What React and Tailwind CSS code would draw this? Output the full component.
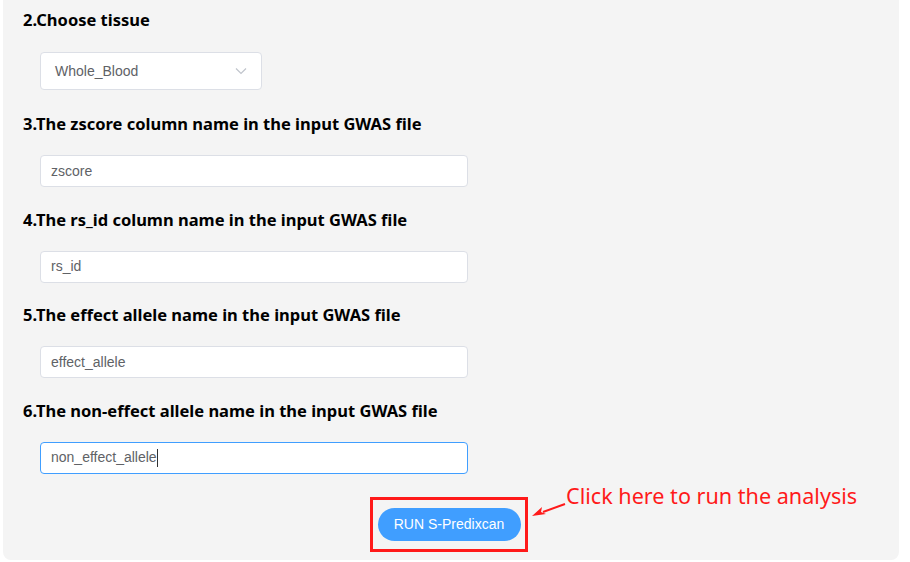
import React from 'react';

const Section = ({ title, value, focused }) => (
  <div className="mb-[20.5px]">
    <h3 className="h-[24px] leading-[24px] text-[16.5px] font-bold text-black font-['Noto_Sans',sans-serif] mb-[19px]">
      {title}
    </h3>
    <div
      className={`ml-[17px] w-[428px] h-[32px] bg-white rounded-[4px] border flex items-center px-[10px] ${
        focused ? 'border-[#409eff]' : 'border-[#dcdfe6]'
      }`}
    >
      <span className="text-[14px] text-[#606266] font-['Liberation_Sans',sans-serif]">{value}</span>
      {focused && <span className="w-px h-[18px] bg-[#303133]" />}
    </div>
  </div>
);

export default function App() {
  return (
    <div className="w-[910px] h-[562px] bg-white relative overflow-hidden">
      <div className="ml-[3px] w-[896px] h-[560px] bg-[#f4f4f4] rounded-b-[8px] pl-[20px] pt-[8px]">
        <h3 className="h-[24px] leading-[24px] text-[16.5px] font-bold text-black font-['Noto_Sans',sans-serif] mb-[20px]">
          2.Choose tissue
        </h3>
        <div className="ml-[17px] w-[222px] h-[38px] bg-white rounded-[4px] border border-[#dcdfe6] flex items-center justify-between pl-[14px] pr-[14px] mb-[22px]">
          <span className="text-[14px] text-[#606266] font-['Liberation_Sans',sans-serif]">Whole_Blood</span>
          <svg width="12" height="8" viewBox="0 0 12 8" fill="none">
            <path d="M1 1.5 L6 6.5 L11 1.5" stroke="#c0c4cc" strokeWidth="1.2" />
          </svg>
        </div>
        <Section title="3.The zscore column name in the input GWAS file" value="zscore" />
        <Section title="4.The rs_id column name in the input GWAS file" value="rs_id" />
        <Section title="5.The effect allele name in the input GWAS file" value="effect_allele" />
        <Section title="6.The non-effect allele name in the input GWAS file" value="non_effect_allele" focused />

        <div className="flex justify-center pt-[3px] pr-[20px]">
          <div className="ml-[-4px] border-[3px] border-[#ff1a1a] w-[158px] h-[55px] flex items-center justify-center">
            <button className="w-[143px] h-[33px] rounded-full bg-[#409eff] text-white text-[14px] font-['Liberation_Sans',sans-serif]">
              RUN S-Predixcan
            </button>
          </div>
        </div>
      </div>

      {/* annotation */}
      <svg className="absolute left-[529px] top-[500px]" width="40" height="22" viewBox="0 0 40 22">
        <path d="M36 4 L14 12" stroke="#ff1a1a" strokeWidth="2" />
        <path d="M3 16 L13 7 L12 12 L17 14 Z" fill="#ff1a1a" />
      </svg>
      <div className="absolute left-[566px] top-[481px] text-[21.6px] leading-[30px] text-[#ff1a1a] font-['Noto_Sans',sans-serif]">
        Click here to run the analysis
      </div>
    </div>
  );
}
